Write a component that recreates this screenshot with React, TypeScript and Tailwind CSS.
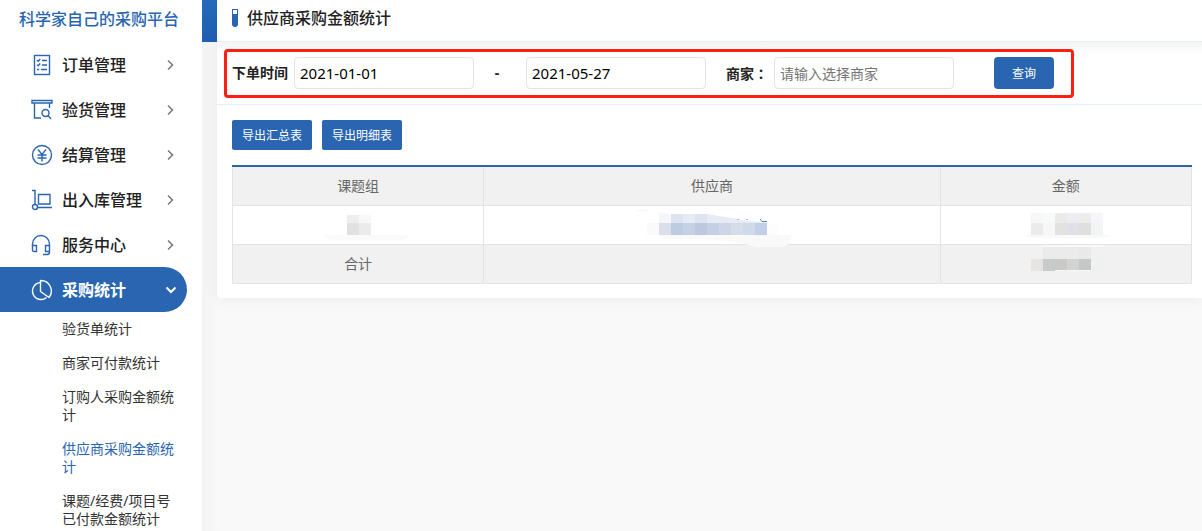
import type { ReactNode } from "react";

type MenuItem = { label: string; icon: ReactNode };

function Icon({ children }: { children: ReactNode }) {
  return (
    <svg viewBox="0 0 22 22" className="h-[22px] w-[22px] shrink-0" fill="none" stroke="currentColor" strokeWidth="1.4" aria-hidden="true">
      {children}
    </svg>
  );
}

const menu: MenuItem[] = [
  {
    label: "订单管理",
    icon: (
      <Icon>
        <rect x="3.5" y="1.5" width="15" height="19" />
        <path d="M6 6.2l1.2 1 2-2.2M6 10.7l1.2 1 2-2.2M6 15.5h2.2M11 6.5h5M11 11h5M10 15.5h6" />
      </Icon>
    ),
  },
  {
    label: "验货管理",
    icon: (
      <Icon>
        <path d="M1 1.5h20v2.500H1zM3.500 4v15h6.500M18.500 4v5" />
        <circle cx="14.500" cy="14" r="3.500" />
        <path d="M17 16.500l3 3.500" />
      </Icon>
    ),
  },
  {
    label: "结算管理",
    icon: (
      <Icon>
        <circle cx="11" cy="11" r="9.500" />
        <path d="M7 5.500l4 5 4-5M11 10.500v7M6.500 11h9M6.500 14h9" />
      </Icon>
    ),
  },
  {
    label: "出入库管理",
    icon: (
      <Icon>
        <path d="M1 1.500h3v14M7.500 5.500h11.500v9.500h-11.500zM6.500 18.500h14.500" />
        <circle cx="4" cy="18" r="2.500" />
      </Icon>
    ),
  },
  {
    label: "服务中心",
    icon: (
      <Icon>
        <path d="M1.500 12v-2a8.500 8.500 0 0 1 17 0v8q0 2.500-2.500 2.500h-4" />
        <path d="M1.500 11.500h4v6h-2.500q-1.500 0-1.500-1.500zM18.500 11.500h-4v6h4" />
      </Icon>
    ),
  },
  {
    label: "采购统计",
    icon: (
      <Icon>
        <path d="M9.500 1.500V12.500L18 18.500A10.500 10.500 0 0 0 9.500 1.500z" strokeLinejoin="round" />
        <path d="M9.500 3.500A8.500 8.500 0 1 0 15.500 18.500" />
      </Icon>
    ),
  },
];

const subMenu = ["验货单统计", "商家可付款统计", "订购人采购金额统计", "供应商采购金额统计", "课题/经费/项目号已付款金额统计"];

function Chevron({ open }: { open: boolean }) {
  return open ? (
    <svg viewBox="0 0 12 12" className="h-3 w-3" fill="none" stroke="currentColor" strokeWidth="2" aria-hidden="true">
      <path d="M1.500 3.500L6 8l4.500-4.500" />
    </svg>
  ) : (
    <svg viewBox="0 0 12 12" className="h-3 w-3 text-[#777]" fill="none" stroke="currentColor" strokeWidth="1.500" aria-hidden="true">
      <path d="M3 1.500L7.500 6L3 10.500" />
    </svg>
  );
}

function Sidebar() {
  const active = "采购统计";
  return (
    <aside className="h-screen w-[202px] shrink-0 overflow-hidden bg-white">
      <h1 className="h-[42px] pl-[19px] text-base leading-[38px] font-medium text-[#2965b0]">科学家自己的采购平台</h1>
      <nav>
        {menu.map((item) => (
          <button
            key={item.label}
            type="button"
            aria-expanded={item.label === active}
            className={
              item.label === active
                ? "flex h-[45px] w-[187px] items-center rounded-r-full bg-[#2965b0] pr-[10px] pl-[31px] text-white"
                : "flex h-[45px] w-[187px] items-center pr-[10px] pl-[31px] text-[#2965b0]"
            }
          >
            {item.icon}
            <span
              className={
                item.label === active
                  ? "ml-[9px] flex-1 text-left text-base font-bold"
                  : "ml-[9px] flex-1 text-left text-base font-medium text-[#222]"
              }
            >
              {item.label}
            </span>
            <Chevron open={item.label === active} />
          </button>
        ))}
        <ul className="pr-5 pl-[62px] text-sm leading-[18px]">
          {subMenu.map((label) => (
            <li key={label} className="py-2">
              <a href="#" className={label === "供应商采购金额统计" ? "text-[#2965b0]" : "text-[#333]"}>
                {label}
              </a>
            </li>
          ))}
        </ul>
      </nav>
    </aside>
  );
}

type Block = [x: number, y: number, w: number, h: number, fill: string];

function Mosaic({ blocks, children, className }: { blocks: Block[]; children?: ReactNode; className: string }) {
  return (
    <svg className={className} aria-hidden="true">
      {children}
      {blocks.map(([x, y, w, h, fill]) => (
        <rect key={`${x}-${y}`} x={x} y={y} width={w} height={h} fill={fill} shapeRendering="crispEdges" />
      ))}
    </svg>
  );
}

const groupBlocks: Block[] = [
  [25, 9, 12, 8, "#efeeed"], [37, 9, 12, 8, "#f7f9f9"],
  [25, 17, 12, 12, "#e2e1e0"], [37, 17, 12, 12, "#ebebeb"],
];
const supplierBlocks: Block[] = [
  [15, 17, 12, 12, "#fafafc"], [27, 17, 12, 12, "#dadfeb"], [39, 17, 12, 12, "#becce2"],
  [51, 17, 12, 12, "#c5d1e5"], [63, 17, 12, 12, "#bcc8df"], [75, 17, 12, 12, "#c4d1e5"],
  [87, 17, 12, 12, "#cdd5e6"], [99, 17, 12, 12, "#d6dce9"], [111, 17, 12, 12, "#cedaea"],
  [123, 17, 12, 12, "#c1d0e7"], [135, 17, 12, 12, "#fdfdfd"],
];
const amountBlocks: Block[] = [
  [25, 7, 12, 10, "#f7f7f6"], [37, 7, 12, 10, "#f8faf9"], [49, 7, 12, 10, "#edebea"],
  [61, 7, 12, 10, "#eceef2"], [73, 7, 12, 10, "#efedec"], [85, 7, 12, 10, "#f4f6f9"],
  [25, 17, 12, 12, "#ebebea"], [37, 17, 12, 12, "#f7f7f7"], [49, 17, 12, 12, "#e4e2e1"],
  [61, 17, 12, 12, "#dfe1e6"], [73, 17, 12, 12, "#dfdfdf"], [85, 17, 12, 12, "#f2f4f4"],
];
const totalBlocks: Block[] = [
  [37, 2, 36, 12, "#ebebeb"], [73, 2, 12, 12, "#e8eae9"], [25, 14, 12, 12, "#e5e4e2"],
  [37, 14, 12, 12, "#c8cacc"], [49, 14, 12, 11, "#c9c9c8"], [61, 14, 12, 11, "#d2d4d3"],
  [73, 14, 12, 11, "#c6c7c6"], [85, 14, 12, 11, "#eff0f0"],
];

const inputClass = "h-8 w-[180px] rounded-sm border border-[#e3e3e3] bg-white px-[5px] outline-none";
const exportClass = "h-[30px] w-20 rounded-xs bg-[#2965b0] pt-[2px] text-xs text-white";
const headClass = "border-x border-b border-[#e3e3e3] p-0 font-normal";
const cellClass = "border border-[#e3e3e3] p-0 text-center font-normal";

export default function App() {
  return (
    <div className="flex min-h-screen bg-[#f9f9f9] font-['Noto_Sans','Noto_Sans_CJK_SC',sans-serif] text-sm text-[#222]">
      <Sidebar />
      <div className="w-[15px] shrink-0 bg-linear-to-r from-[#f3f3f3] to-[#f8f8f8]">
        <div className="h-[42px] bg-linear-to-b from-[#246bbd] to-[#1f5fb2]" />
      </div>
      <main className="min-w-0 flex-1">
        <section className="rounded-bl-sm bg-white pb-[14px] shadow-[0_2px_16px_rgba(0,0,0,0.06)]">
          <header className="flex h-[42px] items-center border-b border-[#e6eff7] pb-[5px] pl-[15px]">
            <svg viewBox="0 0 6 20" className="h-5 w-[6px]" aria-hidden="true">
              <path d="M0 1h6v15q0 3-3 3t-3-3z" fill="#2965b0" />
              <rect x="1" y="2" width="4" height="4" fill="#fff" />
            </svg>
            <h2 className="ml-[9px] text-base font-medium">供应商采购金额统计</h2>
          </header>
          <form className="border-b border-[#e6eff7] bg-linear-to-b from-[#f3f4f5] to-white to-20% px-[7px] pt-[7px] pb-[6px]">
            <div className="flex h-[49px] w-[850px] items-center rounded-sm border-3 border-[#ff1e12] bg-white pb-px pl-[5px]">
              <label htmlFor="from" className="w-[62px] font-bold">下单时间</label>
              <input id="from" type="text" defaultValue="2021-01-01" className={`${inputClass} text-[15px] text-black`} />
              <span className="w-[52px] pr-[6px] text-center font-bold">-</span>
              <input id="to" type="text" aria-label="结束时间" defaultValue="2021-05-27" className={`${inputClass} text-[15px] text-black`} />
              <label htmlFor="seller" className="ml-5 w-12 font-['Noto_Sans_CJK_TC',sans-serif] font-bold">商家：</label>
              <input id="seller" type="text" placeholder="请输入选择商家" className={`${inputClass} text-sm placeholder:text-[#757575]`} />
              <button type="button" className="ml-10 h-8 w-[60px] rounded-sm bg-[#2965b0] pt-[2px] text-xs text-white">查询</button>
            </div>
          </form>
          <div className="flex gap-[10px] px-[15px] py-[15px]">
            <button type="button" className={exportClass}>导出汇总表</button>
            <button type="button" className={exportClass}>导出明细表</button>
          </div>
          <div className="pr-[10px] pl-[15px]">
            <table className="w-full table-fixed border-collapse text-[#666]">
              <colgroup>
                <col className="w-[26.2%]" />
                <col className="w-[47.6%]" />
                <col className="w-[26.2%]" />
              </colgroup>
              <thead className="border-t-2 border-[#2965b0] bg-[#f1f1f1]">
                <tr className="h-[39px]">
                  <th className={headClass}>课题组</th>
                  <th className={headClass}>供应商</th>
                  <th className={headClass}>金额</th>
                </tr>
              </thead>
              <tbody>
                <tr className="h-[39px]">
                  <td className={cellClass}>
                    <Mosaic blocks={groupBlocks} className="mx-auto h-[38px] w-[72px] overflow-visible">
                      <path d="M1 29h88q-5 5-12 5h-64q-7 0-12-5z" fill="#fafafa" />
                    </Mosaic>
                  </td>
                  <td className={cellClass}>
                    <Mosaic blocks={supplierBlocks} className="mx-auto h-[38px] w-[160px] overflow-visible">
                      <path d="M4 5q5-2 12-1v1zM27 6l12 3v8H27z" fill="#f5f6f9" />
                      <path d="M39 8h36l25 4 15 3 20 1v1H39z" fill="#e7ecf4" />
                      <path d="M39 8h12v9H39zM63 8h12v9H63z" fill="#dde4ef" />
                      <path d="M27 29h132q-1 9-7 12h-28q-25-8-62-8H34z" fill="#f9f9fa" />
                      <path d="M105 13.500h2M114 13.500h2" stroke="#a3b5d2" fill="none" />
                      <path d="M128 13l2 2.500h5" stroke="#5f83b8" fill="none" />
                    </Mosaic>
                  </td>
                  <td className={cellClass}>
                    <Mosaic blocks={amountBlocks} className="mx-auto h-[38px] w-[120px] overflow-visible">
                      <path d="M16 29h93q-8 3-17 3H33q-10 0-17-3z" fill="#f9f9f9" />
                    </Mosaic>
                  </td>
                </tr>
                <tr className="h-[39px] bg-[#f1f1f1]">
                  <td className={cellClass}>合计</td>
                  <td className={cellClass} />
                  <td className={cellClass}>
                    <Mosaic blocks={totalBlocks} className="mx-auto h-[38px] w-[120px] overflow-visible">
                      <path d="M34 1q8-1 34-1h34l-8 2H34z" fill="#f9f9f9" />
                      <path d="M42 26l5-2h38v2z" fill="#f7f7f7" />
                    </Mosaic>
                  </td>
                </tr>
              </tbody>
            </table>
          </div>
        </section>
      </main>
    </div>
  );
}
